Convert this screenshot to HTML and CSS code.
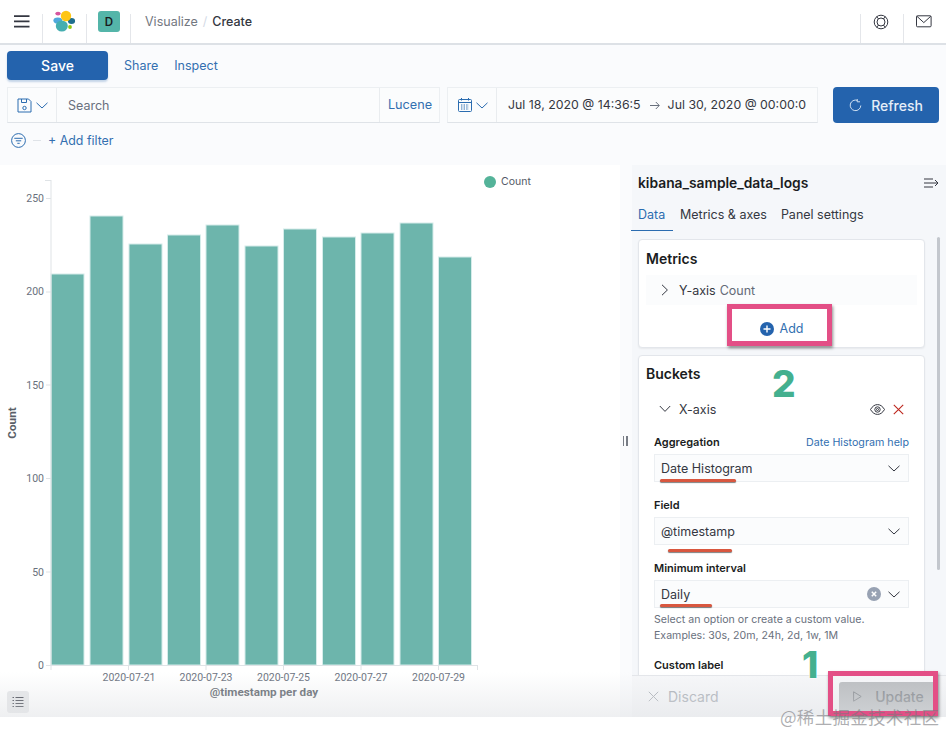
FILE: index.html
```html
<!DOCTYPE html>
<html lang="en">
<head>
<meta charset="utf-8">
<title>Visualize - Create</title>
<link rel="stylesheet" href="styles.css">
</head>
<body>
<div class="page">
  <header class="header">
    <div class="cell cell-menu">
      <svg width="16" height="13" viewBox="0 0 16 13"><path d="M0 1.2h15.5M0 6.4h15.5M0 11.6h15.5" stroke="#343741" stroke-width="1.7" fill="none"/></svg>
    </div>
    <div class="cell cell-logo">
      <svg width="24" height="24" viewBox="0 0 24 24">
        <ellipse cx="5" cy="3.600" rx="2.700" ry="1.900" fill="#d6569f"/>
        <ellipse cx="4.800" cy="10.500" rx="4.400" ry="3.100" fill="#4fa8dc"/>
        <ellipse cx="18.500" cy="11" rx="3.600" ry="3" fill="#1f6e8e"/>
        <ellipse cx="8.800" cy="16" rx="6" ry="5.600" fill="#45aeb0"/>
        <circle cx="13" cy="6" r="5.200" fill="#fec514"/>
        <circle cx="17" cy="17" r="1.900" fill="#93c90e"/>
      </svg>
    </div>
    <div class="cell cell-space"><span class="avatar">D</span></div>
    <nav class="crumbs"><span class="crumb">Visualize</span><span class="crumb-sep">/</span><span class="crumb-now">Create</span></nav>
    <div class="cell cell-help">
      <svg width="16" height="16" viewBox="0 0 16 16" fill="none" stroke="#343741" stroke-width="1"><circle cx="8" cy="8" r="6.800"/><circle cx="8" cy="8" r="4"/><path d="M3.600 2.600l2 2.400M12.400 2.600l-2 2.400M3.600 13.400l2-2.400M12.400 13.400l-2-2.400"/></svg>
    </div>
    <div class="cell cell-mail">
      <svg width="16" height="13" viewBox="0 0 16 13" fill="none" stroke="#343741" stroke-width="1"><rect x=".5" y=".8" width="14.600" height="11" rx="1"/><path d="M.8 1.200L7.800 7.600l7-6.400"/></svg>
    </div>
  </header>

  <div class="topnav">
    <div class="actions">
      <button class="btn-save">Save</button>
      <a class="link">Share</a>
      <a class="link">Inspect</a>
    </div>
    <div class="querybar">
      <div class="search">
        <div class="search-prepend">
          <svg width="15" height="15" viewBox="0 0 15 15" fill="none" stroke="#2b6cb0" stroke-width="1"><path d="M1 1h10.500L14 3.500V14H1z"/><path d="M4.500 1v3.500h5V1"/><circle cx="7.500" cy="10" r="1.700"/></svg>
          <svg width="12" height="7" viewBox="0 0 12 7" fill="none" stroke="#2b6cb0" stroke-width="1"><path d="M.5.8L6 6l5.500-5.200"/></svg>
        </div>
        <span class="search-text">Search</span>
        <a class="search-lang">Lucene</a>
      </div>
      <div class="dates">
        <div class="dates-prepend">
          <svg width="14" height="14" viewBox="0 0 14 14" fill="none" stroke="#2b6cb0" stroke-width="1"><rect x=".5" y="1.500" width="13" height="12" rx="1"/><path d="M.5 4.500h13M3.500 0v2.500M10.500 0v2.500"/><path d="M3 7h8M3 9h8M3 11h8" stroke-dasharray="1.400 1.200"/></svg>
          <svg width="12" height="7" viewBox="0 0 12 7" fill="none" stroke="#2b6cb0" stroke-width="1"><path d="M.5.8L6 6l5.500-5.200"/></svg>
        </div>
        <span class="date-text">Jul 18, 2020 @ 14:36:5</span>
        <svg class="date-arrow" width="10" height="9" viewBox="0 0 10 9" fill="none" stroke="#69707d" stroke-width="1"><path d="M0 4.500h9M5.800 1L9.300 4.500 5.800 8"/></svg>
        <span class="date-text">Jul 30, 2020 @ 00:00:0</span>
      </div>
      <button class="btn-refresh">
        <svg width="13" height="13" viewBox="0 0 13 13" fill="none" stroke="#cfe0f2" stroke-width="1"><path d="M8.400 1.400A5.300 5.300 0 1 0 11.800 6.500"/><path d="M8.200 0v2.800h2.800"/></svg>
        Refresh
      </button>
    </div>
    <div class="filters">
      <svg width="15" height="15" viewBox="0 0 15 15" fill="none" stroke="#2b6cb0" stroke-width="1"><circle cx="7.500" cy="7.500" r="6.900"/><path d="M3.300 5.300h8.400M4.800 7.800h5.400M6.300 10.300h2.400"/></svg>
      <span class="filter-dash"></span>
      <a class="add-filter">+ Add filter</a>
    </div>
  </div>

  <main class="main">
    <section class="chart">
      <svg class="chart-svg" width="620" height="552" viewBox="0 165 620 552">
        <g fill="#6db5ac" stroke="#d5ecea" stroke-width="1">
          <rect x="51" y="274" width="33" height="391"/>
          <rect x="90" y="216" width="33" height="449"/>
          <rect x="129" y="244" width="33" height="421"/>
          <rect x="167.500" y="235" width="33" height="430"/>
          <rect x="206" y="225" width="33" height="440"/>
          <rect x="245" y="246" width="33" height="419"/>
          <rect x="283.500" y="229" width="33" height="436"/>
          <rect x="322.500" y="237" width="33" height="428"/>
          <rect x="361" y="233" width="33" height="432"/>
          <rect x="400" y="223" width="33" height="442"/>
          <rect x="438.500" y="257" width="33" height="408"/>
        </g>
        <path d="M45 180.500h6M51 180v486M46 198.500h5M46 292h5M46 385h5M46 478.500h5M46 572h5M46 665.500h432M51 665v5M128.500 665v5M206 665v5M283.500 665v5M361 665v5M438.500 665v5M477.500 665v5" stroke="#dfe3e6" fill="none"/>
        <g class="tick">
          <text x="44" y="202" text-anchor="end">250</text>
          <text x="44" y="295" text-anchor="end">200</text>
          <text x="44" y="389" text-anchor="end">150</text>
          <text x="44" y="482" text-anchor="end">100</text>
          <text x="44" y="576" text-anchor="end">50</text>
          <text x="44" y="669" text-anchor="end">0</text>
          <text x="129" y="681" text-anchor="middle">2020-07-21</text>
          <text x="206" y="681" text-anchor="middle">2020-07-23</text>
          <text x="283.500" y="681" text-anchor="middle">2020-07-25</text>
          <text x="361" y="681" text-anchor="middle">2020-07-27</text>
          <text x="438.500" y="681" text-anchor="middle">2020-07-29</text>
        </g>
        <text class="axis-title" x="264" y="696" text-anchor="middle">@timestamp per day</text>
        <text class="axis-title" transform="translate(16 423) rotate(-90)" text-anchor="middle">Count</text>
        <circle cx="490" cy="182" r="6" fill="#54b399"/>
        <text class="legend" x="501" y="185">Count</text>
      </svg>
      <button class="legend-toggle" aria-label="Toggle legend">
        <svg width="12" height="12" viewBox="0 0 12 12" fill="none" stroke="#343741" stroke-width="1"><path d="M3.500 1.500h8M3.500 4.500h8M3.500 7.500h8M3.500 10.500h8M.5 1.500h1.500M.5 4.500h1.500M.5 7.500h1.500M.5 10.500h1.500"/></svg>
      </button>
    </section>

    <div class="resizer"><span></span><span></span></div>

    <aside class="panel">
      <div class="panel-head">
        <h2 class="panel-title">kibana_sample_data_logs</h2>
        <svg width="15" height="10" viewBox="0 0 15 10" fill="none" stroke="#343741" stroke-width="1"><path d="M0 1h9M0 5h14M0 9h9M11 2l3 3-3 3"/></svg>
      </div>
      <div class="tabs">
        <span class="tab tab-on">Data</span>
        <span class="tab">Metrics &amp; axes</span>
        <span class="tab">Panel settings</span>
      </div>
      <div class="panel-body">
        <div class="card card-metrics">
          <h3 class="card-title">Metrics</h3>
          <div class="agg-row agg-tinted">
            <svg width="8" height="12" viewBox="0 0 8 12" fill="none" stroke="#343741" stroke-width="1"><path d="M1 .8L6.400 6 1 11.200"/></svg>
            <span class="agg-name">Y-axis</span> <span class="agg-sub">Count</span>
          </div>
          <div class="add-row">
            <svg width="14" height="14" viewBox="0 0 14 14"><circle cx="7" cy="7" r="7" fill="#2463ad"/><path d="M7 3.500v7M3.500 7h7" stroke="#fff" stroke-width="1.400"/></svg>
            <span>Add</span>
          </div>
        </div>
        <div class="card card-buckets">
          <h3 class="card-title">Buckets</h3>
          <div class="agg-row agg-x">
            <svg width="12" height="8" viewBox="0 0 12 8" fill="none" stroke="#343741" stroke-width="1"><path d="M.8 1L6 6.400 11.200 1"/></svg>
            <span class="agg-name">X-axis</span>
            <svg class="eye" width="15" height="11" viewBox="0 0 15 11" fill="none" stroke="#343741" stroke-width="1"><path d="M.5 5.500C2.500 2 5 .6 7.500.6s5 1.400 7 4.900c-2 3.500-4.500 4.900-7 4.900s-5-1.400-7-4.900z"/><circle cx="7.500" cy="5.500" r="2.700"/><circle cx="7.500" cy="5.500" r="1"/></svg>
            <svg class="remove" width="11" height="11" viewBox="0 0 11 11" fill="none" stroke="#bd271e" stroke-width="1.100"><path d="M.8.8l9.400 9.400M10.200.8L.8 10.200"/></svg>
          </div>
          <div class="field field-agg">
            <div class="field-label"><label>Aggregation</label><a>Date Histogram help</a></div>
            <div class="select"><span>Date Histogram</span><svg width="12" height="7" viewBox="0 0 12 7" fill="none" stroke="#343741" stroke-width="1"><path d="M.5.8L6 6l5.500-5.200"/></svg></div>
          </div>
          <div class="field">
            <div class="field-label"><label>Field</label></div>
            <div class="select"><span>@timestamp</span><svg width="12" height="7" viewBox="0 0 12 7" fill="none" stroke="#343741" stroke-width="1"><path d="M.5.8L6 6l5.500-5.200"/></svg></div>
          </div>
          <div class="field">
            <div class="field-label"><label>Minimum interval</label></div>
            <div class="select"><span>Daily</span>
              <svg class="clear" width="14" height="14" viewBox="0 0 14 14"><circle cx="7" cy="7" r="7" fill="#98a2b3"/><path d="M4.800 4.800l4.400 4.400M9.200 4.800L4.800 9.200" stroke="#fff" stroke-width="1.500"/></svg>
              <svg width="12" height="7" viewBox="0 0 12 7" fill="none" stroke="#343741" stroke-width="1"><path d="M.5.8L6 6l5.500-5.200"/></svg></div>
            <p class="help">Select an option or create a custom value.<br>Examples: 30s, 20m, 24h, 2d, 1w, 1M</p>
          </div>
          <div class="field field-custom">
            <div class="field-label"><label>Custom label</label></div>
          </div>
        </div>
        <div class="scrollbar"></div>
      </div>
      <div class="panel-foot">
        <span class="discard">
          <svg width="11" height="11" viewBox="0 0 11 11" fill="none" stroke="#a9aeb5" stroke-width="1"><path d="M.8.8l9.400 9.400M10.200.8L.8 10.200"/></svg>
          Discard
        </span>
        <span class="update">
          <svg width="9" height="11" viewBox="0 0 9 11" fill="none" stroke="#7f8489" stroke-width="1"><path d="M.6.8L8.200 5.500.6 10.200z"/></svg>
          Update
        </span>
      </div>
    </aside>
  </main>

  <div class="shade"></div>
  <div class="mark mark-add"></div>
  <div class="mark mark-update"></div>
  <div class="num num-2">2</div>
  <div class="num num-1">1</div>
  <div class="line line-a"></div>
  <div class="line line-b"></div>
  <div class="line line-c"></div>
  <div class="watermark">@稀土掘金技术社区</div>
</div>
</body>
</html>
```
FILE: styles.css
```css
* { box-sizing: border-box; }
html, body { margin: 0; height: 100%; overflow: hidden; background: #fff; }
body { font-family: Inter, "Noto Sans CJK SC", sans-serif; color: #343741; font-size: 13px; }
h2, h3, p { margin: 0; }
a { color: #2b6cb0; }
button { font-family: inherit; border: 0; }

.page { position: relative; width: 946px; height: 733px; overflow: hidden; }

.header { display: flex; align-items: stretch; height: 45px; background: #fff; border-bottom: 2px solid #dde1e6; }
.cell { display: flex; align-items: center; justify-content: center; height: 43px; }
.cell-menu, .cell-logo, .cell-space { background: linear-gradient(#e4e6ea, #e4e6ea) right bottom / 1px 29px no-repeat; }
.cell-help, .cell-mail { background: linear-gradient(#e4e6ea, #e4e6ea) left bottom / 1px 29px no-repeat; }
.cell-menu { width: 43px; }
.cell-logo { width: 44px; }
.cell-space { width: 44px; }
.avatar { display: flex; align-items: center; justify-content: center; width: 22px; height: 21px; border-radius: 3px; background: #54b5a9; color: #1a1c21; font-size: 11.500px; font-weight: 600; }
.crumbs { display: flex; align-items: center; gap: 5px; margin-left: 14px; flex: 1; font-size: 12.500px; }
.crumb { color: #737780; }
.crumb-sep { color: #d3dae6; }
.crumb-now { color: #343741; font-weight: 500; }
.cell-help { width: 43px; padding-right: 2px; }
.cell-mail { width: 43px; padding-right: 1px; }

.topnav { height: 120px; background: #fafbfd; padding: 6px 7px 0; }
.actions { display: flex; align-items: center; height: 29px; }
.btn-save { width: 101px; height: 29px; border-radius: 4px; background: #2463ad; color: #fff; font-size: 14px; font-weight: 500; box-shadow: 0 2px 2px rgba(36,99,173,.25); }
.link { font-size: 12.500px; margin-left: 16px; color: #336fb0; }
.link + .link { margin-left: 16px; }
.querybar { display: flex; margin-top: 7px; height: 36px; }
.search { display: flex; align-items: center; width: 433px; background: #fbfcfd; border: 1px solid #eceff2; border-bottom-color: #dfe3e8; }
.search-prepend { display: flex; align-items: center; gap: 4px; height: 100%; width: 49px; padding-left: 9px; border-right: 1px solid #e9ecef; }
.search-text { flex: 1; padding-left: 11px; color: #69707d; font-size: 12.500px; }
.search-lang { display: flex; align-items: center; justify-content: center; width: 60px; height: 100%; padding: 0 0 2px 1px; border-left: 1px solid #e9ecef; font-size: 12.700px; color: #336fb0; }
.dates { display: flex; align-items: center; margin-left: 7px; width: 371px; background: #fbfcfd; border: 1px solid #eceff2; border-bottom-color: #dfe3e8; }
.dates-prepend { display: flex; align-items: center; gap: 4px; height: 100%; width: 49px; padding-left: 10px; border-right: 1px solid #e9ecef; flex: none; }
.date-text { font-size: 12.350px; color: #343741; padding-bottom: 2px; white-space: nowrap; }
.dates-prepend + .date-text { margin-left: 11px; }
.date-arrow { margin: 0 8px 0 9px; }
.btn-refresh { display: flex; align-items: center; justify-content: center; gap: 9px; margin-left: 15px; width: 106px; height: 36px; border-radius: 4px; background: #2463ad; color: #e6eef8; font-size: 14px; font-weight: 500; }
.filters { display: flex; align-items: center; margin-top: 10px; padding-left: 4px; }
.filter-dash { width: 8px; height: 1px; background: #dfe3e8; margin: 0 7px 0 7px; }
.add-filter { font-size: 12.400px; color: #336fb0; }

.main { position: relative; display: flex; height: 552px; background: #fafbfd; }
.chart { position: relative; width: 620px; background: #fff; flex: none; }
.chart-svg { display: block; }
.tick text { font-family: Roboto, sans-serif; font-size: 10.500px; fill: #69707d; }
.axis-title { font-family: Roboto, sans-serif; font-size: 11.700px; font-weight: 700; fill: #5a5f68; }
.legend { font-family: Inter, sans-serif; font-size: 10.500px; fill: #535966; }
.legend-toggle { position: absolute; left: 7px; bottom: 4px; display: flex; align-items: center; justify-content: center; width: 22px; height: 22px; padding: 0; border-radius: 3px; background: #e6e7e9; }
.resizer { width: 10px; display: flex; gap: 2px; justify-content: center; align-items: center; flex: none; }
.resizer span { display: block; width: 1.500px; height: 10px; background: #777c85; }

.panel { display: flex; flex-direction: column; width: 316px; padding-left: 2px; background: linear-gradient(90deg, #fafbfd 2px, #f5f7fa 2px); flex: none; }
.panel-head { display: flex; align-items: center; justify-content: space-between; height: 35px; padding: 0 7px 0 6px; }
.panel-title { font-size: 13.800px; font-weight: 600; color: #1a1c21; }
.tabs { display: flex; height: 31px; align-items: flex-start; padding-top: 7px; margin-left: -1px; }
.tab { font-size: 12.500px; padding: 0 7px; color: #343741; height: 24px; white-space: nowrap; }
.tab-on { color: #2b6cb0; border-bottom: 1px solid #2b6cb0; width: 42px; }
.panel-body { position: relative; flex: 1; min-height: 0; overflow: hidden; padding: 8px 21px 0 6px; }
.scrollbar { position: absolute; top: 6px; right: 6px; width: 3px; height: 333px; background: #c3c7cd; border-radius: 2px; }
.card { background: #fff; border: 1px solid #e3e6eb; border-radius: 4px; box-shadow: 0 1px 2px rgba(0,0,0,.06); padding: 0 7px; }
.card-metrics { height: 109px; }
.card-buckets { margin-top: 7px; height: 330px; }
.card-title { font-size: 14px; font-weight: 600; color: #1a1c21; line-height: 17px; padding-top: 10px; height: 35px; }
.card-buckets .card-title { padding-top: 9px; }
.agg-row { display: flex; align-items: center; height: 30px; font-size: 12.500px; padding-left: 15px; }
.agg-tinted { background: #fbfcfd; }
.agg-name { margin-left: 10px; color: #343741; margin-right: 4px; }
.agg-sub { color: #646a77; }
.add-row { display: flex; align-items: center; justify-content: center; gap: 6px; height: 34px; font-size: 12.500px; color: #336fb0; padding-top: 13px; }
.agg-x { margin-top: 3px; padding-left: 13px; }
.agg-x .agg-name { flex: 1; margin-left: 8px; }
.eye { margin-right: 8px; }
.remove { margin-right: 13px; }
.field { margin: 0 8px; }
.field.field-agg { margin-top: 10px; }
.field-label { display: flex; justify-content: space-between; align-items: center; height: 16px; }
.field-label label { font-size: 11px; font-weight: 600; color: #1a1c21; }
.field-label a { font-size: 10.700px; color: #336fb0; }
.select { display: flex; align-items: center; height: 28px; margin-top: 4px; padding: 0 8px 0 6px; background: #fbfcfd; border: 1px solid #eceff2; font-size: 12.500px; color: #343741; }
.select span { flex: 1; }
.clear { margin-right: 7px; }
.field + .field { margin-top: 15px; }
.help { margin-top: 4px; font-size: 10.600px; line-height: 15.500px; color: #69707d; }
.field.field-custom { margin-top: 14px; }
.panel-foot { display: flex; align-items: center; justify-content: space-between; height: 42px; flex: none; padding: 0 10px 0 16px; background: #f6f7f9; border-top: 1px solid #e4e6ea; }
.discard { display: flex; align-items: center; gap: 9px; color: #a9aeb5; font-size: 14px; }
.update { display: flex; align-items: center; justify-content: center; gap: 13px; width: 97px; height: 30px; padding-left: 2px; background: #b9bcbf; color: #7f8489; font-size: 14px; font-weight: 500; border-radius: 3px; }

.shade { position: absolute; left: 0; top: 672px; width: 946px; height: 45px; background: linear-gradient(rgba(230,232,235,0), rgba(225,227,230,.55)); pointer-events: none; }
.mark { position: absolute; border: 5px solid #e34f86; box-shadow: 1px 2px 3px rgba(0,0,0,.45); }
.mark-add { left: 727px; top: 304px; width: 105px; height: 42px; }
.mark-update { left: 828px; top: 671px; width: 110px; height: 45px; }
.num { position: absolute; font-family: Inter, sans-serif; font-weight: 800; color: #44b08f; text-shadow: 0 0 2px #fff, 0 0 2px #fff; }
.num-2 { left: 772px; top: 360px; font-size: 37px; line-height: 47px; }
.num-1 { left: 802px; top: 642px; font-size: 37px; line-height: 45px; }
.line { position: absolute; height: 3px; border-radius: 2px; background: #d9573f; box-shadow: 0 1px 1px rgba(0,0,0,.5); }
.line-a { left: 660px; top: 479px; width: 76px; }
.line-b { left: 668px; top: 549px; width: 64px; }
.line-c { left: 660px; top: 604px; width: 52px; }
.watermark { position: absolute; left: 780px; top: 708px; font-size: 17.500px; line-height: 18px; letter-spacing: .3px; color: rgba(120,120,125,.6); white-space: nowrap; font-family: "Noto Sans CJK SC", sans-serif; }
```
